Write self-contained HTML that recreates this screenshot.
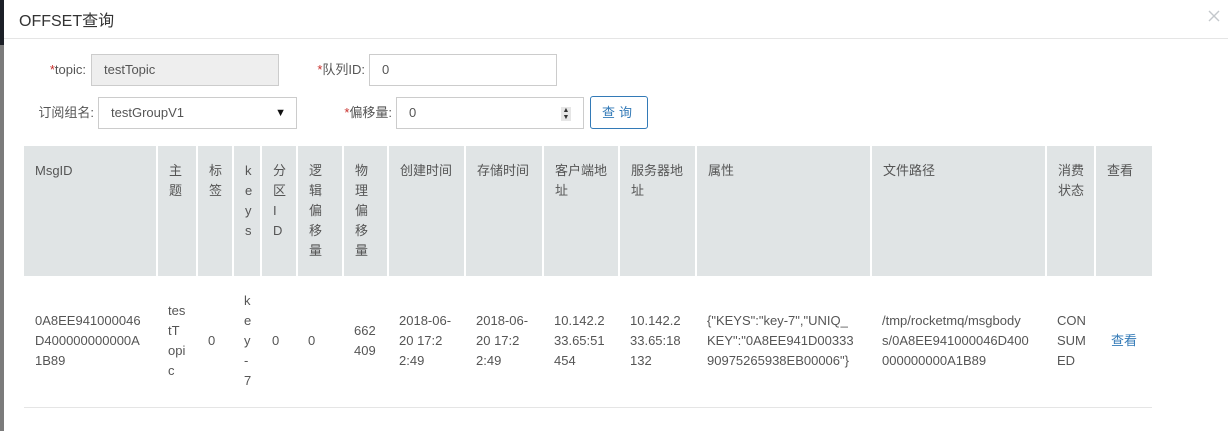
<!DOCTYPE html>
<html><head><meta charset="utf-8"><style>
*{box-sizing:border-box;margin:0;padding:0}
body{width:1228px;height:431px;overflow:hidden;background:#fff;font-family:"Liberation Sans","Noto Sans CJK SC",sans-serif;font-size:13px;color:#555;position:relative}
.strip1{position:absolute;left:0;top:0;width:4px;height:45px;background:#1c2027}
.strip2{position:absolute;left:0;top:45px;width:4px;height:386px;background:#7b7b7b}
.title{position:absolute;left:19px;top:7px;font-size:16px;color:#333}
.hr{position:absolute;left:4px;right:0;top:38px;height:1px;background:#e5e5e5}
.close{position:absolute;left:1208px;top:10px}
.lbl{position:absolute;font-size:13px;color:#555;line-height:32px;text-align:right}
.lbl i{color:#c9302c;font-style:normal}
.inp{position:absolute;height:32px;border:1px solid #ccc;padding-left:12px;line-height:30px;font-size:13px;color:#555;background:#fff}
.btn{position:absolute;left:590px;top:96px;width:58px;height:33px;border:1px solid #337ab7;border-radius:3px;color:#337ab7;text-align:center;line-height:31px;font-size:13px;letter-spacing:4px}
table{position:absolute;left:24px;top:146px;border-collapse:collapse;table-layout:fixed;width:1128px}
th{background:#e0e4e5;font-weight:normal;text-align:left;vertical-align:top;height:130px;padding:15px 0 0 11px;line-height:20px;border-right:2px solid #fff;color:#555}
th:last-child{border-right:0}
td{height:131px;vertical-align:middle;padding-left:11px;line-height:20px;border-bottom:1px solid #e5e5e5}
a{color:#337ab7;text-decoration:none}
</style></head><body>
<div class="strip1"></div><div class="strip2"></div>
<div class="title">OFFSET查询</div>
<svg class="close" width="12" height="12" viewBox="0 0 12 12"><path d="M1 1L11 11M11 1L1 11" stroke="#c4c8cc" stroke-width="1.4"/></svg>
<div class="hr"></div>
<div class="lbl" style="left:30px;top:54px;width:56px"><i>*</i>topic:</div>
<div class="inp" style="left:91px;top:54px;width:188px;background:#eee">testTopic</div>
<div class="lbl" style="left:300px;top:54px;width:65px"><i>*</i>队列ID:</div>
<div class="inp" style="left:369px;top:54px;width:188px">0</div>
<div class="lbl" style="left:30px;top:97px;width:64px">订阅组名:</div>
<div class="inp" style="left:98px;top:97px;width:199px">testGroupV1<span style="position:absolute;right:10px;top:0;font-size:11px;color:#111">▼</span></div>
<div class="lbl" style="left:330px;top:97px;width:62px"><i>*</i>偏移量:</div>
<div class="inp" style="left:396px;top:97px;width:188px">0<span style="position:absolute;right:12px;top:9px;width:10px;height:14px;background:#e6e6e6;font-size:7px;line-height:7px;color:#333;text-align:center">▲<br>▼</span></div>
<div class="btn">查询</div>
<table>
<colgroup><col style="width:133px"><col style="width:40px"><col style="width:36px"><col style="width:28px"><col style="width:36px"><col style="width:46px"><col style="width:45px"><col style="width:77px"><col style="width:78px"><col style="width:76px"><col style="width:77px"><col style="width:175px"><col style="width:175px"><col style="width:49px"><col style="width:57px"></colgroup>
<tr><th>MsgID</th><th>主<br>题</th><th>标<br>签</th><th>k<br>e<br>y<br>s</th><th>分<br>区<br>I<br>D</th><th>逻<br>辑<br>偏<br>移<br>量</th><th>物<br>理<br>偏<br>移<br>量</th><th>创建时间</th><th>存储时间</th><th>客户端地<br>址</th><th>服务器地<br>址</th><th>属性</th><th>文件路径</th><th>消费<br>状态</th><th>查看</th></tr>
<tr><td>0A8EE941000046<br>D400000000000A<br>1B89</td><td>tes<br>tT<br>opi<br>c</td><td>0</td><td>k<br>e<br>y<br>-<br>7</td><td>0</td><td>0</td><td>662<br>409</td><td>2018-06-<br>20 17:2<br>2:49</td><td>2018-06-<br>20 17:2<br>2:49</td><td>10.142.2<br>33.65:51<br>454</td><td>10.142.2<br>33.65:18<br>132</td><td>{"KEYS":"key-7","UNIQ_<br>KEY":"0A8EE941D00333<br>90975265938EB00006"}</td><td>/tmp/rocketmq/msgbody<br>s/0A8EE941000046D400<br>000000000A1B89</td><td>CON<br>SUM<br>ED</td><td style="padding-left:16px"><a>查看</a></td></tr>
</table>
</body></html>
